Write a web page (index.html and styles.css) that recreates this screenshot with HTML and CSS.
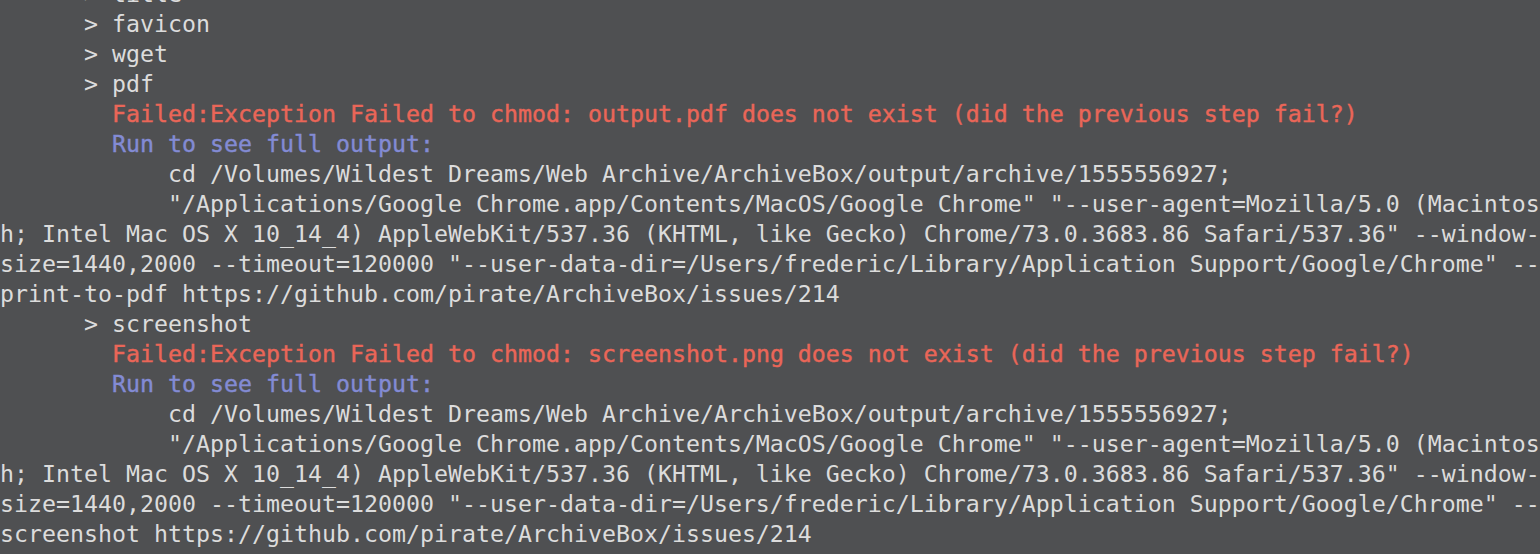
FILE: index.html
```html
<!DOCTYPE html>
<html>
<head>
<meta charset="utf-8">
<link rel="stylesheet" href="styles.css">
</head>
<body>
<div class="term">
<div class="line">      &gt; title</div>
<div class="line">      &gt; favicon</div>
<div class="line">      &gt; wget</div>
<div class="line">      &gt; pdf</div>
<div class="line">        <span class="err">Failed:Exception Failed to chmod: output.pdf does not exist (did the previous step fail?)</span></div>
<div class="line">        <span class="info">Run to see full output:</span></div>
<div class="line">            cd /Volumes/Wildest Dreams/Web Archive/ArchiveBox/output/archive/1555556927;</div>
<div class="line">            "/Applications/Google Chrome.app/Contents/MacOS/Google Chrome" "--user-agent=Mozilla/5.0 (Macintos</div>
<div class="line">h; Intel Mac OS X 10_14_4) AppleWebKit/537.36 (KHTML, like Gecko) Chrome/73.0.3683.86 Safari/537.36" --window-</div>
<div class="line">size=1440,2000 --timeout=120000 "--user-data-dir=/Users/frederic/Library/Application Support/Google/Chrome" --</div>
<div class="line">print-to-pdf https://github.com/pirate/ArchiveBox/issues/214</div>
<div class="line">      &gt; screenshot</div>
<div class="line">        <span class="err">Failed:Exception Failed to chmod: screenshot.png does not exist (did the previous step fail?)</span></div>
<div class="line">        <span class="info">Run to see full output:</span></div>
<div class="line">            cd /Volumes/Wildest Dreams/Web Archive/ArchiveBox/output/archive/1555556927;</div>
<div class="line">            "/Applications/Google Chrome.app/Contents/MacOS/Google Chrome" "--user-agent=Mozilla/5.0 (Macintos</div>
<div class="line">h; Intel Mac OS X 10_14_4) AppleWebKit/537.36 (KHTML, like Gecko) Chrome/73.0.3683.86 Safari/537.36" --window-</div>
<div class="line">size=1440,2000 --timeout=120000 "--user-data-dir=/Users/frederic/Library/Application Support/Google/Chrome" --</div>
<div class="line">screenshot https://github.com/pirate/ArchiveBox/issues/214</div>
</div>
</body>
</html>
```

FILE: styles.css
```css
html, body {
  margin: 0;
  padding: 0;
  background: #4f5052;
  overflow: hidden;
}
.term {
  margin-top: -21px;
  font-family: "DejaVu Sans Mono", "Liberation Mono", monospace;
  font-size: 23.25px;
  line-height: 30px;
  color: #dcdcdc;
}
.line {
  white-space: pre;
  height: 30px;
}
.err {
  color: #ea6658;
  -webkit-text-stroke: 0.4px #ea6658;
}
.info {
  color: #838bd4;
  -webkit-text-stroke: 0.4px #838bd4;
}
```
